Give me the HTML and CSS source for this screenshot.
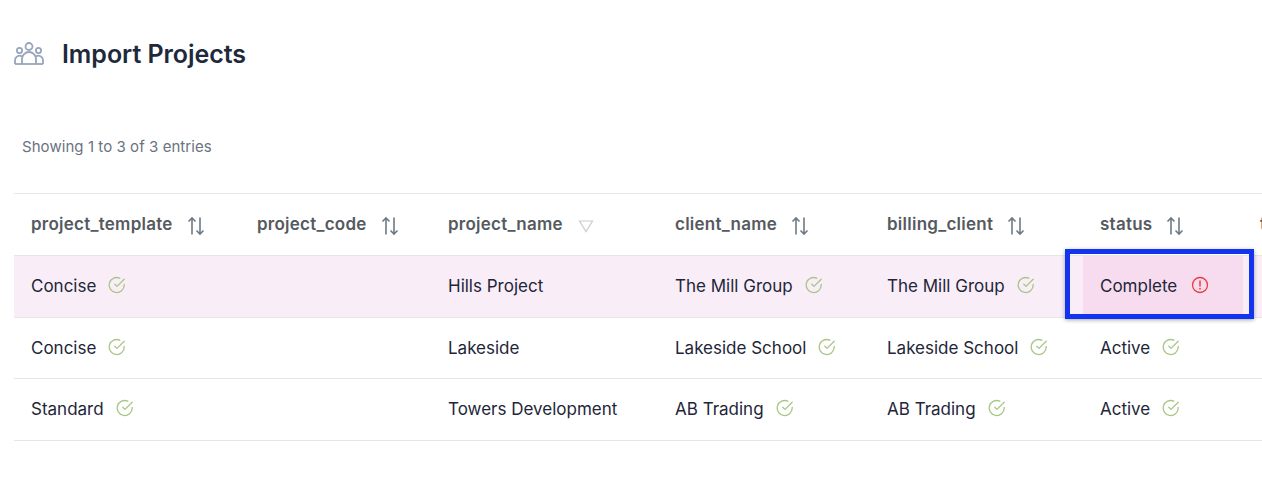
FILE: index.html
```html
<!DOCTYPE html>
<html lang="en">
<head>
<meta charset="utf-8">
<title>Import Projects</title>
<link rel="stylesheet" href="styles.css">
</head>
<body>
<svg class="sprites" width="0" height="0" aria-hidden="true">
  <symbol id="ok" viewBox="0 0 18 18">
    <path d="M16.2 8.3v.7a7.5 7.5 0 1 1-4.4-6.8" fill="none" stroke="currentColor" stroke-width="1.3" stroke-linecap="round" stroke-linejoin="round"/>
    <path d="M16.2 3.2 9 10.4l-2.2-2.2" fill="none" stroke="currentColor" stroke-width="1.3" stroke-linecap="round" stroke-linejoin="round"/>
  </symbol>
  <symbol id="sort" viewBox="0 0 18 20">
    <path d="M5 18.5V2M1.500 5.500 5 2l3.500 3.500M13 1.500V18M9.500 14.500 13 18l3.500-3.500" fill="none" stroke="currentColor" stroke-width="1.6"/>
  </symbol>
</svg>
<header class="title-bar">
  <svg class="title-icon" viewBox="0 0 30 24" aria-hidden="true">
    <g fill="none" stroke="currentColor" stroke-width="1.800">
      <circle cx="15" cy="4.500" r="3.500"/>
      <circle cx="5.500" cy="8.500" r="2.600"/>
      <circle cx="24.500" cy="8.500" r="2.600"/>
      <path d="M8 22v-5a7 7 0 0 1 14 0v5"/>
      <path d="M8 14.500a4.500 4.500 0 0 0-7 3.500v4M22 14.500a4.500 4.500 0 0 1 7 3.500v4"/>
      <path d="M1 22h28"/>
    </g>
  </svg>
  <h1 class="title">Import Projects</h1>
</header>
<p class="summary">Showing 1 to 3 of 3 entries</p>
<div class="table-wrap">
  <table class="grid">
    <colgroup>
      <col class="c1"><col class="c2"><col class="c3"><col class="c4"><col class="c5"><col class="c6"><col class="c7">
    </colgroup>
    <thead>
      <tr>
        <th><span class="cell">project_template<svg class="sort"><use href="#sort"/></svg></span></th>
        <th><span class="cell">project_code<svg class="sort"><use href="#sort"/></svg></span></th>
        <th><span class="cell">project_name<svg class="sorted" viewBox="0 0 16 14" aria-hidden="true"><path d="M1.500 2h13L8 12.500z" fill="none" stroke="currentColor" stroke-width="1.200"/></svg></span></th>
        <th><span class="cell">client_name<svg class="sort"><use href="#sort"/></svg></span></th>
        <th><span class="cell">billing_client<svg class="sort"><use href="#sort"/></svg></span></th>
        <th><span class="cell">status<svg class="sort"><use href="#sort"/></svg></span></th>
        <th><span class="cell">type</span></th>
      </tr>
    </thead>
    <tbody>
      <tr class="flagged">
        <td><span class="cell">Concise<svg class="ok"><use href="#ok"/></svg></span></td>
        <td></td>
        <td><span class="cell">Hills Project</span></td>
        <td><span class="cell">The Mill Group<svg class="ok"><use href="#ok"/></svg></span></td>
        <td><span class="cell">The Mill Group<svg class="ok"><use href="#ok"/></svg></span></td>
        <td class="focus"><span class="cell">Complete<svg class="err" viewBox="0 0 18 18" aria-hidden="true"><circle cx="9" cy="9" r="7.500" fill="none" stroke="currentColor" stroke-width="1.300"/><path d="M9 5v5" stroke="currentColor" stroke-width="1.500" stroke-linecap="round"/><circle cx="9" cy="12.700" r=".9" fill="currentColor"/></svg></span><div class="annotation"></div></td>
        <td></td>
      </tr>
      <tr>
        <td><span class="cell">Concise<svg class="ok"><use href="#ok"/></svg></span></td>
        <td></td>
        <td><span class="cell">Lakeside</span></td>
        <td><span class="cell">Lakeside School<svg class="ok"><use href="#ok"/></svg></span></td>
        <td><span class="cell">Lakeside School<svg class="ok"><use href="#ok"/></svg></span></td>
        <td><span class="cell">Active<svg class="ok"><use href="#ok"/></svg></span></td>
        <td></td>
      </tr>
      <tr>
        <td><span class="cell">Standard<svg class="ok"><use href="#ok"/></svg></span></td>
        <td></td>
        <td><span class="cell">Towers Development</span></td>
        <td><span class="cell">AB Trading<svg class="ok"><use href="#ok"/></svg></span></td>
        <td><span class="cell">AB Trading<svg class="ok"><use href="#ok"/></svg></span></td>
        <td><span class="cell">Active<svg class="ok"><use href="#ok"/></svg></span></td>
        <td></td>
      </tr>
    </tbody>
  </table>
</div>
</body>
</html>
```
FILE: styles.css
```css
* { box-sizing: border-box; }
html, body { height: 100%; }
body {
  margin: 0;
  background: #fff;
  overflow: hidden;
  font-family: "Inter", "Liberation Sans", sans-serif;
  color: #1f2937;
}
.sprites { position: absolute; }
.title-bar {
  display: flex;
  align-items: center;
  gap: 18px;
  padding: 37px 0 0 14px;
  height: 71px;
}
.title-icon { width: 30px; height: 24px; color: #97a5bd; }
.title {
  margin: 0;
  font-size: 25px;
  line-height: 30px;
  font-weight: 600;
  letter-spacing: -.05px;
  color: #1e293b;
}
.summary {
  margin: 0;
  padding: 65px 0 0 22px;
  font-size: 15px;
  line-height: 22px;
  color: #6b7280;
  letter-spacing: .06px;
}
.table-wrap {
  margin: 35px 0 0 14px;
  width: 1248px;
  overflow: hidden;
  position: relative;
  height: 290px;
}
.grid {
  table-layout: fixed;
  width: 1400px;
  border-collapse: collapse;
  border-top: 1px solid #e8e8ea;
}
.c1 { width: 226px; }
.c2 { width: 191px; }
.c3 { width: 227px; }
.c4 { width: 212px; }
.c5 { width: 213px; }
.c6 { width: 160px; }
.c7 { width: 171px; }
th, td {
  padding: 0 0 0 17px;
  text-align: left;
  white-space: nowrap;
  border-bottom: 1px solid #e6e6e8;
}
th {
  height: 62px;
  padding-bottom: 2px;
  font-size: 17px;
  font-weight: 600;
  color: #555a60;
  letter-spacing: .25px;
}
td {
  height: 61.500px;
  font-size: 17px;
  font-weight: 400;
  color: #1e2638;
}
.cell { display: inline-flex; align-items: center; }
.sort { width: 18px; height: 20px; margin-left: 14px; color: #6e7a86; position: relative; top: 2px; }
.sorted { width: 16px; height: 14px; margin-left: 15px; color: #c9cccf; position: relative; top: 2px; }
.ok { width: 18px; height: 18px; margin-left: 12px; color: #a8c686; position: relative; top: -1px; }
.err { width: 18px; height: 18px; margin-left: 14px; color: #ee3b36; position: relative; top: -1px; }
.flagged td { background: #f9eef8; }
.flagged td.focus {
  background: #f7dcf0;
  position: relative;
}
.annotation {
  position: absolute;
  left: -18px;
  top: -7px;
  width: 189px;
  height: 70px;
  border: 5px solid #1233f0;
  box-shadow: 0 1px 4px rgba(0, 0, 0, .35);
  pointer-events: none;
}
```
